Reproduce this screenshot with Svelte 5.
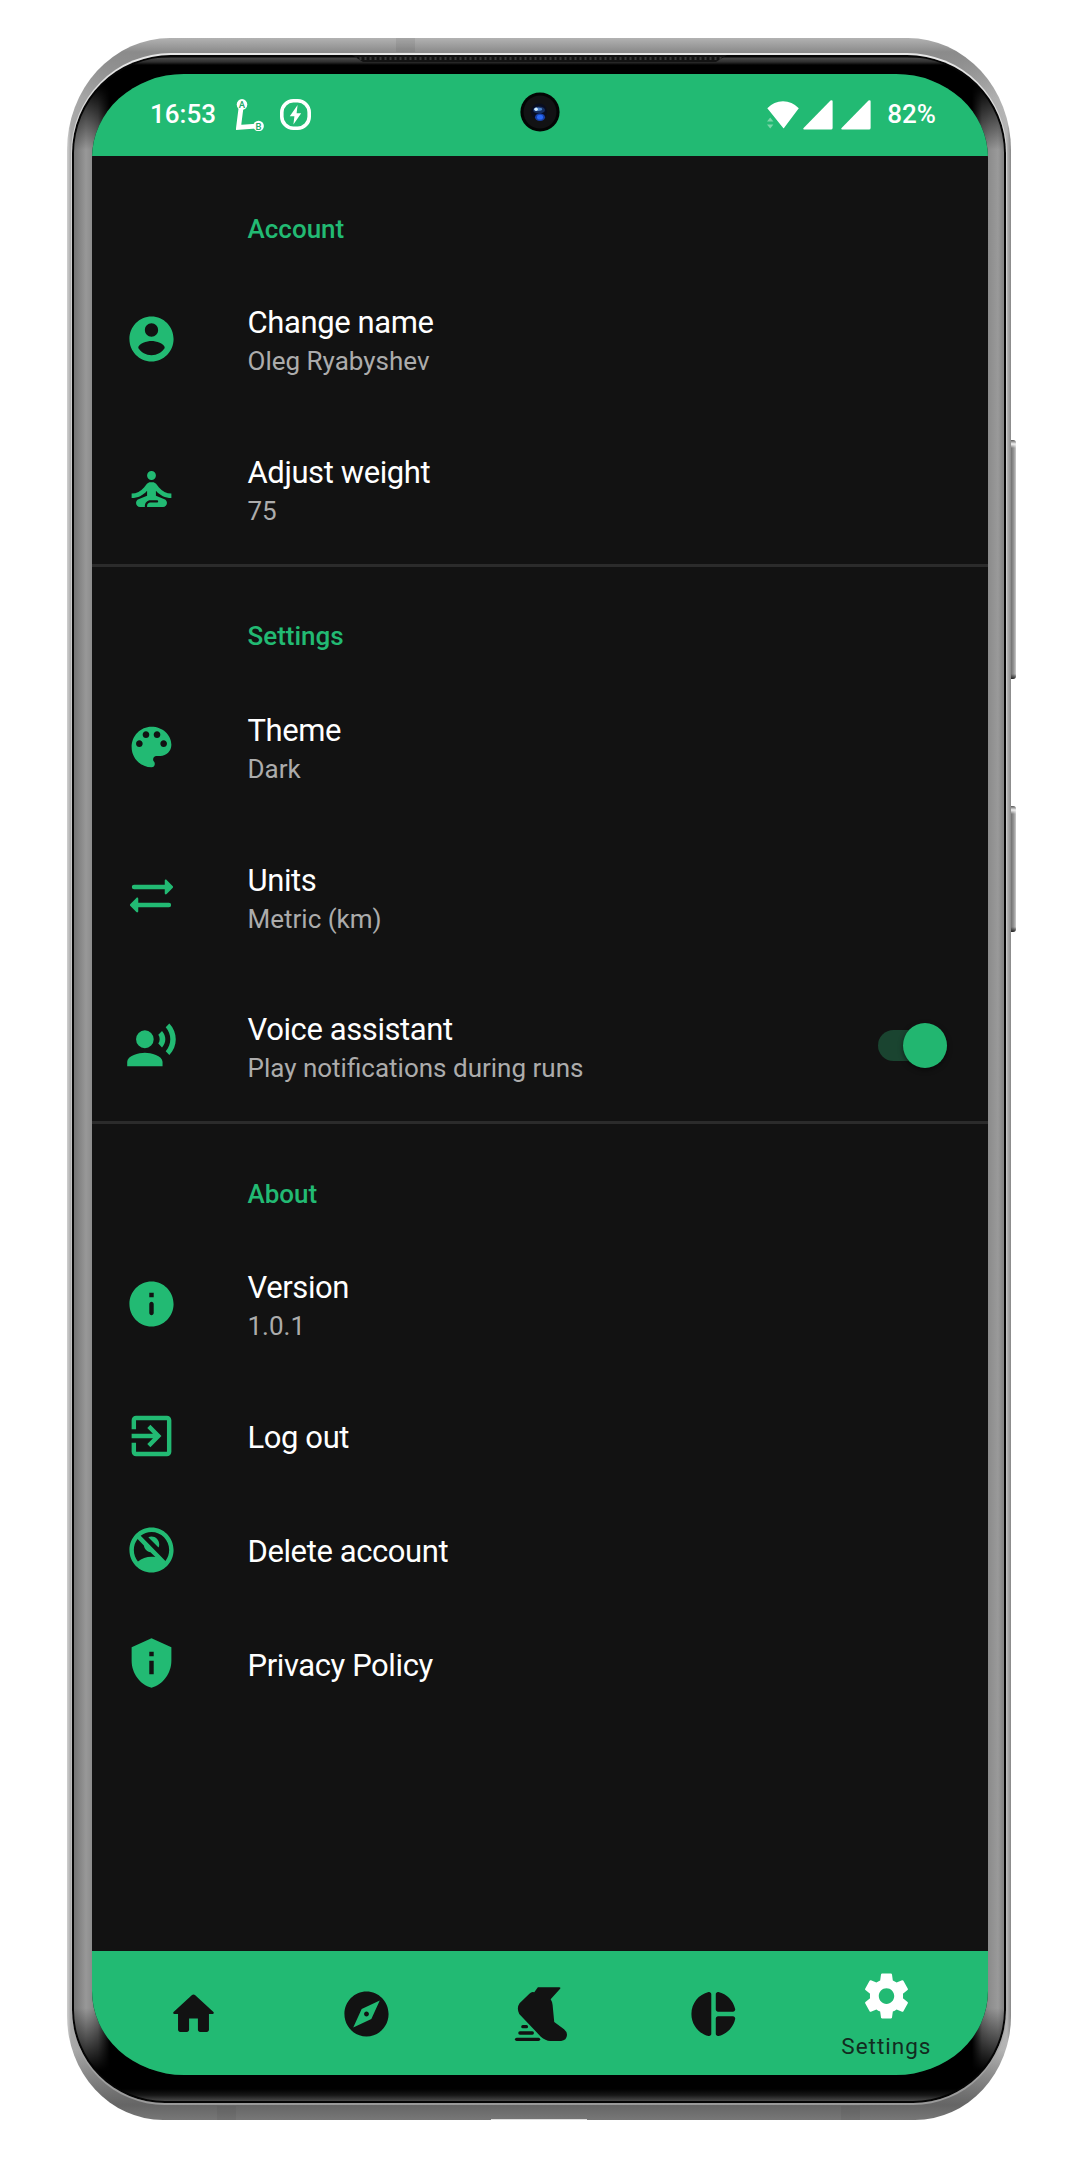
<script>
  const sections = [
    {
      title: 'Account',
      rows: [
        { icon: 'account', title: 'Change name', sub: 'Oleg Ryabyshev' },
        { icon: 'meditate', title: 'Adjust weight', sub: '75' }
      ]
    },
    {
      title: 'Settings',
      rows: [
        { icon: 'palette', title: 'Theme', sub: 'Dark' },
        { icon: 'units', title: 'Units', sub: 'Metric (km)' },
        { icon: 'voice', title: 'Voice assistant', sub: 'Play notifications during runs', toggle: true }
      ]
    },
    {
      title: 'About',
      rows: [
        { icon: 'info', title: 'Version', sub: '1.0.1' },
        { icon: 'logout', title: 'Log out' },
        { icon: 'noAccount', title: 'Delete account' },
        { icon: 'shield', title: 'Privacy Policy' }
      ]
    }
  ];

  const tabs = [
    { icon: 'home' },
    { icon: 'compass' },
    { icon: 'shoe' },
    { icon: 'pie' },
    { icon: 'gear', label: 'Settings' }
  ];

  // Icon outlines on a 24-unit grid
  const paths = {
    account:
      'M12 2C6.48 2 2 6.48 2 12s4.48 10 10 10 10-4.48 10-10S17.52 2 12 2zm0 3c1.66 0 3 1.34 3 3s-1.34 3-3 3-3-1.34-3-3 1.34-3 3-3zm0 14.2c-2.5 0-4.71-1.28-6-3.22.03-1.99 4-3.08 6-3.08 1.99 0 5.97 1.09 6 3.08-1.29 1.94-3.5 3.22-6 3.22z',
    meditate:
      'M14 6a2 2 0 1 1-4 0 2 2 0 0 1 4 0zM21 16v-2c-2.24 0-4.16-.96-5.6-2.68l-1.34-1.6C13.68 9.26 13.12 9 12.53 9h-1.05c-.59 0-1.15.26-1.53.72l-1.34 1.6C7.16 13.04 5.24 14 3 14v2c2.77 0 5.19-1.17 7-3.25V15l-3.88 1.55C5.45 16.82 5 17.48 5 18.21 5 19.2 5.8 20 6.79 20H9v-.5c0-1.38 1.12-2.5 2.5-2.5h3c.28 0 .5.22.5.5s-.22.5-.5.5h-3c-.83 0-1.5.67-1.5 1.5v.5h7.21C18.2 20 19 19.2 19 18.21c0-.73-.45-1.39-1.12-1.66L14 15v-2.25C15.81 14.83 18.23 16 21 16z',
    palette:
      'M12 3c-4.97 0-9 4.03-9 9s4.03 9 9 9c.83 0 1.5-.67 1.5-1.5 0-.39-.15-.74-.39-1.01-.23-.26-.38-.61-.38-.99 0-.83.67-1.5 1.5-1.5H16c2.76 0 5-2.24 5-5 0-4.42-4.03-8-9-8zm-5.5 9c-.83 0-1.5-.67-1.5-1.5S5.67 9 6.5 9 8 9.67 8 10.5 7.33 12 6.5 12zm3-4C8.67 8 8 7.33 8 6.5S8.67 5 9.5 5s1.5.67 1.5 1.5S10.33 8 9.5 8zm5 0c-.83 0-1.5-.67-1.5-1.5S13.67 5 14.5 5s1.5.67 1.5 1.5S15.33 8 14.5 8zm3 4c-.83 0-1.5-.67-1.5-1.5S16.67 9 17.5 9s1.5.67 1.5 1.5-.67 1.5-1.5 1.5z',
    units:
      'M18 7V5.2c0-.5.5-.7.85-.35l2.7 2.7c.3.3.3.6 0 .9l-2.7 2.7c-.35.35-.85.15-.85-.35V9H4.1a1 1 0 0 1 0-2zM6 15v-1.8c0-.5-.5-.7-.85-.35l-2.7 2.7c-.3.3-.3.6 0 .9l2.7 2.7c.35.35.85.15.85-.35V17h13.9a1 1 0 0 0 0-2z',
    voice:
      'M13 9a4 4 0 1 1-8 0 4 4 0 0 1 8 0zM9 15c-2.67 0-8 1.34-8 4v2h16v-2c0-2.66-5.33-4-8-4zm7.76-9.64l-1.68 1.69c.84 1.18.84 2.71 0 3.89l1.68 1.69c2.02-2.02 2.02-5.07 0-7.27zM20.07 2l-1.63 1.63c2.77 3.02 2.77 7.56 0 10.74L20.07 16c3.9-3.89 3.91-9.95 0-14z',
    info:
      'M12 2C6.48 2 2 6.48 2 12s4.48 10 10 10 10-4.48 10-10S17.52 2 12 2zm0 15c-.55 0-1-.45-1-1v-4c0-.55.45-1 1-1s1 .45 1 1v4c0 .55-.45 1-1 1zm1-8h-2V7h2v2z',
    logout:
      'M10.09 15.59L11.5 17l5-5-5-5-1.41 1.41L12.67 11H3v2h9.67l-2.58 2.59zM19 3H5c-1.11 0-2 .9-2 2v4h2V5h14v14H5v-4H3v4c0 1.1.89 2 2 2h14c1.1 0 2-.9 2-2V5c0-1.1-.9-2-2-2z',
    noAccount:
      'M15.18 10.94c.2-.44.32-.92.32-1.44C15.5 7.57 13.93 6 12 6c-.52 0-1 .12-1.44.32l4.62 4.62zM12 2C6.48 2 2 6.48 2 12s4.48 10 10 10 10-4.48 10-10S17.52 2 12 2zM4 12c0-1.85.63-3.55 1.69-4.9l2.86 2.86c.21 1.56 1.43 2.79 2.99 2.99l2.2 2.2C13.17 15.05 12.59 15 12 15c-2.32 0-4.45.8-6.14 2.12C4.7 15.73 4 13.95 4 12zm14.31 4.9L7.1 5.69C8.45 4.63 10.15 4 12 4c4.42 0 8 3.58 8 8 0 1.85-.63 3.54-1.69 4.9z',
    shield:
      'M12 1L3 5v6c0 5.55 3.84 10.74 9 12 5.16-1.26 9-6.45 9-12V5l-9-4zm-1 6h2v2h-2V7zm0 4h2v6h-2v-6z',
    home:
      'M10 19v-5h4v5c0 .55.45 1 1 1h3c.55 0 1-.45 1-1v-7h1.7c.46 0 .68-.57.33-.87L12.67 3.6c-.38-.34-.96-.34-1.34 0l-8.36 7.53c-.34.3-.13.87.33.87H5v7c0 .55.45 1 1 1h3c.55 0 1-.45 1-1z',
    compass:
      'M12 10.9c-.61 0-1.1.49-1.1 1.1s.49 1.1 1.1 1.1 1.1-.49 1.1-1.1-.49-1.1-1.1-1.1zM12 2C6.48 2 2 6.48 2 12s4.48 10 10 10 10-4.48 10-10S17.52 2 12 2zm2.19 12.19L6 18l3.81-8.19L18 6l-3.81 8.19z',
    pie:
      'M11 3.18v17.64c0 .64-.59 1.12-1.21.98C5.32 20.8 2 16.79 2 12s3.32-8.8 7.79-9.8c.62-.14 1.21.34 1.21.98zm2.03 0v6.81c0 .55.45 1 1 1h6.79c.64 0 1.12-.59.98-1.22-.85-3.76-3.8-6.72-7.55-7.57-.63-.14-1.22.34-1.22.98zm0 10.83v6.81c0 .64.59 1.12 1.22.98 3.76-.85 6.71-3.82 7.56-7.58.14-.62-.35-1.22-.98-1.22h-6.79c-.56.01-1.01.46-1.01 1.01z',
    gear:
      'M19.43 12.98c.04-.32.07-.64.07-.98s-.03-.66-.07-.98l2.11-1.65c.19-.15.24-.42.12-.64l-2-3.46c-.12-.22-.39-.3-.61-.22l-2.49 1c-.52-.4-1.08-.73-1.69-.98l-.38-2.65C14.46 2.18 14.25 2 14 2h-4c-.25 0-.46.18-.49.42l-.38 2.65c-.61.25-1.17.59-1.69.98l-2.49-1c-.23-.09-.49 0-.61.22l-2 3.46c-.13.22-.07.49.12.64l2.11 1.65c-.04.32-.07.65-.07.98s.03.66.07.98l-2.11 1.65c-.19.15-.24.42-.12.64l2 3.46c.12.22.39.3.61.22l2.49-1c.52.4 1.08.73 1.69.98l.38 2.65c.03.24.24.42.49.42h4c.25 0 .46-.18.49-.42l.38-2.65c.61-.25 1.17-.59 1.69-.98l2.49 1c.23.09.49 0 .61-.22l2-3.46c.12-.22.07-.49-.12-.64l-2.11-1.65zM12 15.5c-1.93 0-3.5-1.57-3.5-3.5s1.57-3.5 3.5-3.5 3.5 1.57 3.5 3.5-1.57 3.5-3.5 3.5z'
  };
</script>

{#snippet icon(name)}
  {#if name === 'shoe'}
    <svg class="icon" viewBox="0 0 162 162" preserveAspectRatio="none">
      <path
        d="M73 1H138Q144 1 141 5L112 37Q117 44 118 54L123 105L153 127Q162 135 162 144Q161 160 144 162H111Q96 161 82 149L16 81Q7 63 17 49L47 20Q54 13 62 16Z"
      />
      <rect x="22" y="114" width="21" height="10" rx="5" />
      <rect x="13" y="133" width="48" height="10" rx="5" />
      <rect x="3" y="152" width="77" height="10" rx="5" />
    </svg>
  {:else}
    <svg class="icon" viewBox="0 0 24 24" preserveAspectRatio="none"><path fill-rule="evenodd" d={paths[name]} /></svg>
  {/if}
{/snippet}

<div class="phone">
  <i class="key volume"></i>
  <i class="key power"></i>
  <i class="seam top"></i>
  <i class="seam left"></i>
  <i class="seam right"></i>
  <i class="port"></i>
  <div class="rim">
    <div class="bezel">
      <i class="speaker"></i>
      <div class="screen">
        <header class="status">
          <div class="group">
            <span class="clock">16:53</span>
            <svg class="route" viewBox="0 0 28 32">
              <path d="M5.5 5L2.5 28.5L22 27" fill="none" stroke="#fff" stroke-width="4.8" />
              <circle cx="6" cy="5.4" r="5.3" fill="#fff" />
              <circle cx="22.6" cy="27" r="5.3" fill="#fff" />
              <text x="6" y="8.9" text-anchor="middle">A</text>
              <text x="22.6" y="30.6" text-anchor="middle">B</text>
            </svg>
            <svg class="bolt" viewBox="0 0 31 31">
              <rect x="1.8" y="1.8" width="27.4" height="27.4" rx="11.5" fill="none" stroke="#fff" stroke-width="3.6" />
              <path d="M17.6 6L9.8 17.2h4.6L13.4 25.4L21.2 14.2h-4.6z" fill="#fff" />
            </svg>
          </div>
          <svg class="camera" viewBox="0 0 40 40">
            <circle cx="20" cy="20" r="19.6" fill="#030504" />
            <circle cx="20" cy="20" r="16.5" fill="#121214" />
            <circle cx="19" cy="19.5" r="8" fill="#090d20" />
            <ellipse cx="19" cy="18" rx="6" ry="3.6" fill="#173062" />
            <ellipse cx="18" cy="17.3" rx="4.2" ry="1.7" fill="#4d83c8" />
            <circle cx="16.1" cy="17.2" r="1.7" fill="#d3eeff" />
            <ellipse cx="20" cy="25.2" rx="5" ry="3.8" fill="#1740a8" />
            <ellipse cx="20" cy="25.2" rx="3" ry="2.4" fill="#2868f5" />
          </svg>
          <div class="group signals">
            <svg class="wifi" viewBox="0 0 32 28">
              <path d="M16.2 27L.3 7.3Q7 .3 16 .3T31.8 7.3L17 27Q16.5 27.6 16.2 27z" fill="#fff" />
              <path d="M0 20.5L3.2 16.6L6.4 20.5zM0 23.6h6.4L3.2 27.4z" fill="#7bd6a8" />
            </svg>
            <svg class="bars" viewBox="0 0 30 30"><path d="M27.5.6Q29.6-.6 29.6 1.4V28Q29.6 29.6 28 29.6H1.2Q-.4 29.4.6 27.9z" fill="#fff" /></svg>
            <svg class="bars" viewBox="0 0 30 30"><path d="M27.5.6Q29.6-.6 29.6 1.4V28Q29.6 29.6 28 29.6H1.2Q-.4 29.4.6 27.9z" fill="#fff" /></svg>
            <span class="battery">82%</span>
          </div>
        </header>

        <main>
          {#each sections as section}
            <section>
              <h2>{section.title}</h2>
              {#each section.rows as row}
                <div class="row" class:single={!row.sub}>
                  {@render icon(row.icon)}
                  <div class="text">
                    <span class="title">{row.title}</span>
                    {#if row.sub}<span class="sub">{row.sub}</span>{/if}
                  </div>
                  {#if row.toggle}
                    <div class="switch"><i class="thumb"></i></div>
                  {/if}
                </div>
              {/each}
            </section>
          {/each}
        </main>

        <nav>
          {#each tabs as tab}
            <div class="tab" class:active={tab.label}>
              {@render icon(tab.icon)}
              {#if tab.label}<span>{tab.label}</span>{/if}
            </div>
          {/each}
        </nav>
      </div>
    </div>
  </div>
</div>

<style>
  :global(body) {
    background: #fff;
    font-family: Roboto, 'Liberation Sans', sans-serif;
  }
  * {
    box-sizing: border-box;
  }
  svg {
    display: block;
    flex: none;
  }

  .phone {
    position: relative;
    width: 944px;
    height: 2082px;
    margin: 38px 0 0 67px;
    padding: 15px 4px 15px;
    border-radius: 103px 103px 96px 96px / 112px 112px 104px 104px;
    background:
      linear-gradient(180deg, #b2b2b2 0, #8b8b8b 14px, transparent 60px),
      linear-gradient(0deg, #777 0, #656565 15px, transparent 70px),
      linear-gradient(90deg, #d0d0d0 0, #a9a9a9 4px, #888 100px, #888 844px, #b5b5b5 940px, #888 944px);
  }
  .rim {
    height: 100%;
    padding: 2px 1px;
    border-radius: 100px 100px 94px 94px / 100px 100px 94px 94px;
    background: linear-gradient(180deg, #e8e8e8 0, #d0d0d0 100px, #bbb 1900px, #999 100%);
  }
  .bezel {
    position: relative;
    height: 100%;
    padding: 19px 18px 28px 20px;
    border-radius: 99px 99px 93px 93px / 98px 98px 93px 93px;
    box-shadow: inset 0 0 0 2px #050505;
    background:
      linear-gradient(180deg, #050505 0, #050505 2px, #484848 3px, #2e2e2e 7px, #000 10px, #000 30px, transparent 95px),
      linear-gradient(0deg, #111 0, #4a4a4a 2px, #161616 8px, #000 14px, #000 32px, transparent 95px),
      linear-gradient(90deg, #777 0, #777 3px, #989898 14px, #8c8c8c 20px, #777 26px, #000 38px, #000 900px, #777 910px, #8c8c8c 917px, #9a9a9a 926px, #858585 931px);
  }
  .screen {
    position: relative;
    display: flex;
    flex-direction: column;
    height: 2001px;
    overflow: hidden;
    border-radius: 92px / 84px;
    background: #121212;
  }

  .key {
    position: absolute;
    right: -4.5px;
    width: 5px;
    border-radius: 0 3px 3px 0;
    background:
      linear-gradient(180deg, #555 0, #f2f2f2 4px, transparent 8px, transparent calc(100% - 5px), #222 100%),
      linear-gradient(90deg, #707070, #999 60%, #ccc);
  }
  .volume {
    top: 402px;
    height: 239px;
  }
  .power {
    top: 768px;
    height: 126px;
  }
  .seam {
    position: absolute;
    width: 19px;
    height: 14px;
    background: rgba(60, 60, 60, 0.1);
  }
  .seam.top {
    top: 0;
    left: 329px;
  }
  .seam.left {
    bottom: 0;
    left: 150px;
  }
  .seam.right {
    bottom: 0;
    left: 774px;
  }
  .port {
    position: absolute;
    bottom: 0;
    left: 424px;
    width: 96px;
    height: 1px;
    background: #ddd;
  }
  .speaker {
    position: absolute;
    top: 0;
    left: 280px;
    width: 375px;
    height: 7px;
    clip-path: polygon(0 0, 100% 0, calc(100% - 11px) 100%, 11px 100%);
    background:
      repeating-linear-gradient(90deg, transparent 0, transparent 2px, #3a3a3a 3px, #3a3a3a 4px, transparent 5px) 0 2px / 100% 3px no-repeat,
      #131313;
  }

  .status {
    display: flex;
    flex: none;
    justify-content: space-between;
    align-items: center;
    height: 82px;
    padding: 0 52px 1px 58px;
    background: #22ba73;
    color: #fff;
    font-size: 26px;
    font-weight: 500;
    line-height: 30px;
  }
  .group {
    display: flex;
    flex: 1;
    align-items: center;
  }
  .clock,
  .battery {
    margin-top: -1px;
  }
  .signals {
    justify-content: flex-end;
  }
  .route {
    width: 28px;
    height: 32px;
    margin-left: 20px;
  }
  .route text {
    font-size: 9.5px;
    font-weight: 500;
    fill: #22a868;
  }
  .bolt {
    width: 31px;
    height: 31px;
    margin-left: 16px;
  }
  .camera {
    width: 40px;
    height: 40px;
    margin: -5px 0 0 -6px;
  }
  .wifi {
    width: 32px;
    height: 28px;
  }
  .bars {
    width: 30px;
    height: 30px;
    margin-left: 4px;
  }
  .bars + .bars {
    margin-left: 8px;
  }
  .battery {
    margin-left: 16px;
  }

  main {
    flex: 1;
  }
  section + section {
    box-shadow: inset 0 3px 0 #2b2b2b;
  }
  h2 {
    display: flex;
    align-items: center;
    height: 108.2px;
    margin: 0;
    padding: 37.4px 0 0 155.5px;
    color: #22ba73;
    font-size: 26px;
    font-weight: 500;
    line-height: 36px;
  }
  .row {
    display: flex;
    align-items: center;
    height: 149.7px;
    padding: 0 41px 0 33px;
    color: #22ba73;
  }
  .icon {
    width: 53px;
    height: 54px;
    fill: currentColor;
  }
  .row .icon {
    margin: 0 0 0 -0.5px;
  }
  .row.single {
    height: 113.9px;
  }
  .text {
    display: flex;
    flex: 1;
    flex-direction: column;
    margin-left: 70px;
    padding-top: 4.6px;
  }
  .title {
    color: #fff;
    font-size: 31px;
    letter-spacing: -0.4px;
    line-height: 40px;
  }
  .sub {
    color: #acacac;
    font-size: 26px;
    line-height: 36px;
  }
  .switch {
    display: flex;
    justify-content: flex-end;
    align-items: center;
    width: 69px;
    height: 31px;
    border-radius: 16px;
    background: #1a4430;
  }
  .thumb {
    flex: none;
    width: 44px;
    height: 45px;
    border-radius: 50%;
    background: #22b670;
    box-shadow: 0 2px 5px rgba(0, 0, 0, 0.5);
  }

  nav {
    display: flex;
    flex: none;
    height: 124px;
    padding: 0 15px;
    background: #22ba73;
    color: #121212;
  }
  .tab {
    display: flex;
    flex: 1;
    flex-direction: column;
    align-items: center;
    padding-top: 36px;
  }
  .tab.active {
    padding-top: 18px;
  }
  .tab.active .icon {
    fill: #fff;
  }
  .tab span {
    margin-top: 9px;
    color: #122c1f;
    font-size: 22.5px;
    letter-spacing: 1px;
    line-height: 28px;
  }
</style>
